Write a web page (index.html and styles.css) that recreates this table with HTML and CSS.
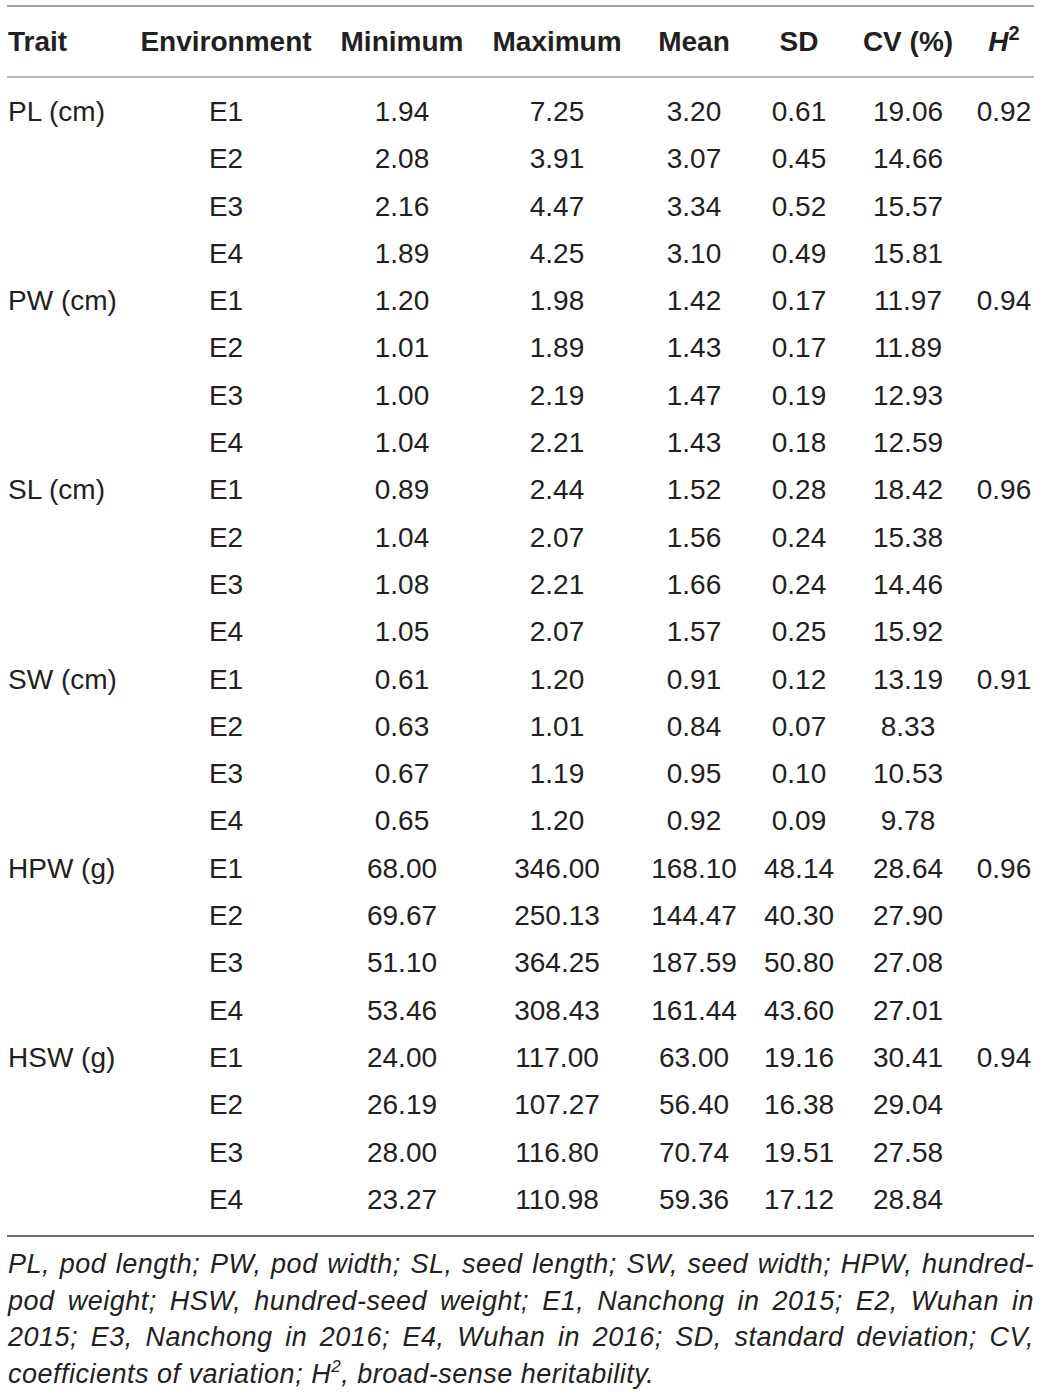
FILE: index.html
```html
<!DOCTYPE html>
<html lang="en">
  <head>
    <meta charset="UTF-8" />
    <meta name="viewport" content="width=device-width, initial-scale=1.0" />
    <title>Pod and seed traits</title>
    <link rel="stylesheet" href="styles.css">
  </head>
  <body>
    <div class="container">
      <table class="trait-table">
        <colgroup>
          <col class="col-trait">
          <col class="col-env">
          <col class="col-min">
          <col class="col-max">
          <col class="col-mean">
          <col class="col-sd">
          <col class="col-cv">
          <col class="col-h2">
        </colgroup>
        <thead>
          <tr>
            <th class="trait">Trait</th>
            <th>Environment</th>
            <th>Minimum</th>
            <th>Maximum</th>
            <th>Mean</th>
            <th>SD</th>
            <th>CV (%)</th>
            <th><i>H</i><sup>2</sup></th>
          </tr>
        </thead>
        <tbody>
          <tr class="first-row"><td class="trait">PL (cm)</td><td>E1</td><td>1.94</td><td>7.25</td><td>3.20</td><td>0.61</td><td>19.06</td><td>0.92</td></tr>
          <tr><td class="trait"></td><td>E2</td><td>2.08</td><td>3.91</td><td>3.07</td><td>0.45</td><td>14.66</td><td></td></tr>
          <tr><td class="trait"></td><td>E3</td><td>2.16</td><td>4.47</td><td>3.34</td><td>0.52</td><td>15.57</td><td></td></tr>
          <tr><td class="trait"></td><td>E4</td><td>1.89</td><td>4.25</td><td>3.10</td><td>0.49</td><td>15.81</td><td></td></tr>
          <tr><td class="trait">PW (cm)</td><td>E1</td><td>1.20</td><td>1.98</td><td>1.42</td><td>0.17</td><td>11.97</td><td>0.94</td></tr>
          <tr><td class="trait"></td><td>E2</td><td>1.01</td><td>1.89</td><td>1.43</td><td>0.17</td><td>11.89</td><td></td></tr>
          <tr><td class="trait"></td><td>E3</td><td>1.00</td><td>2.19</td><td>1.47</td><td>0.19</td><td>12.93</td><td></td></tr>
          <tr><td class="trait"></td><td>E4</td><td>1.04</td><td>2.21</td><td>1.43</td><td>0.18</td><td>12.59</td><td></td></tr>
          <tr><td class="trait">SL (cm)</td><td>E1</td><td>0.89</td><td>2.44</td><td>1.52</td><td>0.28</td><td>18.42</td><td>0.96</td></tr>
          <tr><td class="trait"></td><td>E2</td><td>1.04</td><td>2.07</td><td>1.56</td><td>0.24</td><td>15.38</td><td></td></tr>
          <tr><td class="trait"></td><td>E3</td><td>1.08</td><td>2.21</td><td>1.66</td><td>0.24</td><td>14.46</td><td></td></tr>
          <tr><td class="trait"></td><td>E4</td><td>1.05</td><td>2.07</td><td>1.57</td><td>0.25</td><td>15.92</td><td></td></tr>
          <tr><td class="trait">SW (cm)</td><td>E1</td><td>0.61</td><td>1.20</td><td>0.91</td><td>0.12</td><td>13.19</td><td>0.91</td></tr>
          <tr><td class="trait"></td><td>E2</td><td>0.63</td><td>1.01</td><td>0.84</td><td>0.07</td><td>8.33</td><td></td></tr>
          <tr><td class="trait"></td><td>E3</td><td>0.67</td><td>1.19</td><td>0.95</td><td>0.10</td><td>10.53</td><td></td></tr>
          <tr><td class="trait"></td><td>E4</td><td>0.65</td><td>1.20</td><td>0.92</td><td>0.09</td><td>9.78</td><td></td></tr>
          <tr><td class="trait">HPW (g)</td><td>E1</td><td>68.00</td><td>346.00</td><td>168.10</td><td>48.14</td><td>28.64</td><td>0.96</td></tr>
          <tr><td class="trait"></td><td>E2</td><td>69.67</td><td>250.13</td><td>144.47</td><td>40.30</td><td>27.90</td><td></td></tr>
          <tr><td class="trait"></td><td>E3</td><td>51.10</td><td>364.25</td><td>187.59</td><td>50.80</td><td>27.08</td><td></td></tr>
          <tr><td class="trait"></td><td>E4</td><td>53.46</td><td>308.43</td><td>161.44</td><td>43.60</td><td>27.01</td><td></td></tr>
          <tr><td class="trait">HSW (g)</td><td>E1</td><td>24.00</td><td>117.00</td><td>63.00</td><td>19.16</td><td>30.41</td><td>0.94</td></tr>
          <tr><td class="trait"></td><td>E2</td><td>26.19</td><td>107.27</td><td>56.40</td><td>16.38</td><td>29.04</td><td></td></tr>
          <tr><td class="trait"></td><td>E3</td><td>28.00</td><td>116.80</td><td>70.74</td><td>19.51</td><td>27.58</td><td></td></tr>
          <tr class="last-row"><td class="trait"></td><td>E4</td><td>23.27</td><td>110.98</td><td>59.36</td><td>17.12</td><td>28.84</td><td></td></tr>
        </tbody>
      </table>

      <p class="footnote">
        <span class="line">PL, pod length; PW, pod width; SL, seed length; SW, seed width; HPW, hundred-</span>
        <span class="line">pod weight; HSW, hundred-seed weight; E1, Nanchong in 2015; E2, Wuhan in</span>
        <span class="line">2015; E3, Nanchong in 2016; E4, Wuhan in 2016; SD, standard deviation; CV,</span>
        <span class="line last">coefficients of variation; H<sup>2</sup>, broad-sense heritability.</span>
      </p>
    </div>
  </body>
</html>
```

FILE: styles.css
```css
* {
  box-sizing: border-box;
}

body {
  margin: 0;
  background-color: #ffffff;
  color: #231f20;
  font-family: "Liberation Sans", Arial, sans-serif;
}

.container {
  width: 1027px;
  margin-left: 7px;
  padding-top: 5px;
}

.trait-table {
  width: 100%;
  border-collapse: collapse;
  table-layout: fixed;
  border-top: 2px solid #a3a3a3;
  border-bottom: 2px solid #6e6e6e;
}

.col-trait { width: 123px; }
.col-env { width: 192px; }
.col-min { width: 160px; }
.col-max { width: 150px; }
.col-mean { width: 124px; }
.col-sd { width: 86px; }
.col-cv { width: 132px; }
.col-h2 { width: 60px; }

.trait-table th {
  font-size: 28px;
  font-weight: bold;
  line-height: 33px;
  padding: 18px 0 18px 0;
  text-align: center;
  white-space: nowrap;
  border-bottom: 2px solid #b8b8b8;
}

.trait-table th sup {
  font-size: 20px;
  line-height: 0;
  vertical-align: 11px;
}

.trait-table td {
  font-size: 28px;
  line-height: 47.3px;
  padding: 0;
  text-align: center;
  white-space: nowrap;
}

.trait-table .trait {
  text-align: left;
  padding-left: 1px;
}

.first-row td {
  padding-top: 10px;
}

.last-row td {
  padding-bottom: 12px;
}

.footnote {
  margin: 9px 0 0 1px;
  font-size: 27px;
  font-style: italic;
  letter-spacing: 0.5px;
  line-height: 36.5px;
}

.footnote .line {
  display: block;
  white-space: nowrap;
  text-align: justify;
  text-align-last: justify;
}

.footnote .line.last {
  text-align-last: left;
}

.footnote sup {
  font-size: 17px;
  line-height: 0;
  vertical-align: 11px;
}
```
